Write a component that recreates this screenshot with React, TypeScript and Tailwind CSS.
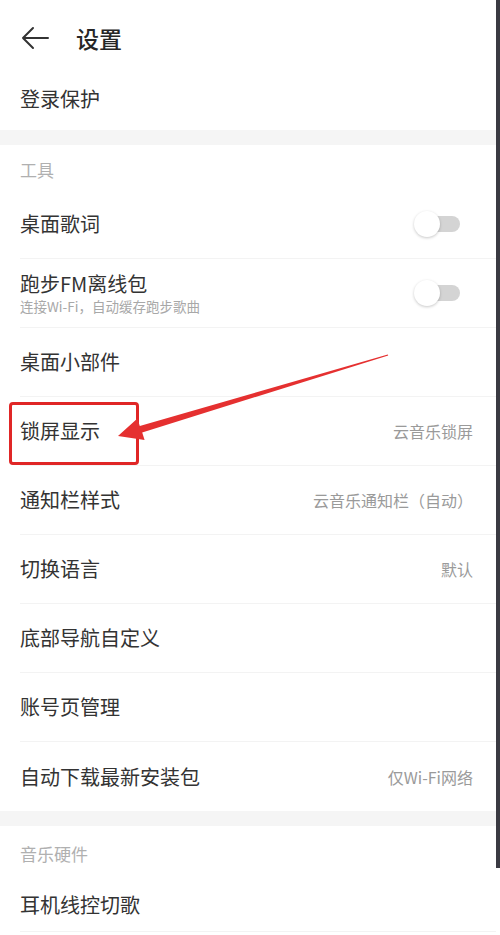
import React from "react";

interface Row {
  title: string;
  sub?: string;
  value?: string;
  toggle?: boolean;
  last?: boolean;
}

const toolRows: Row[] = [
  { title: "桌面歌词", toggle: true },
  { title: "跑步FM离线包", sub: "连接Wi-Fi，自动缓存跑步歌曲", toggle: true },
  { title: "桌面小部件" },
  { title: "锁屏显示", value: "云音乐锁屏" },
  { title: "通知栏样式", value: "云音乐通知栏（自动）" },
  { title: "切换语言", value: "默认" },
  { title: "底部导航自定义" },
  { title: "账号页管理" },
  { title: "自动下载最新安装包", value: "仅Wi-Fi网络", last: true },
];

function Toggle() {
  return (
    <div className="relative mr-[13px] h-[26px] w-[46px]">
      <div className="absolute right-0 top-[5px] h-[16px] w-[38px] rounded-full bg-[#d4d4d4]" />
      <div className="absolute left-0 top-0 h-[26px] w-[26px] rounded-full bg-white shadow-[0_1px_3px_rgba(0,0,0,0.22)]" />
    </div>
  );
}

function SettingRow({ row }: { row: Row }) {
  return (
    <div
      className={
        row.last
          ? "ml-5 flex h-[69px] items-center justify-between pr-[23px]"
          : "ml-5 flex h-[69px] items-center justify-between border-b border-[#f3f3f3] pr-[23px]"
      }
    >
      <div className="flex flex-col">
        <span className="text-[20px] leading-[26px] text-[#333]">{row.title}</span>
        {row.sub && (
          <span className="text-[13.5px] leading-[18px] text-[#a8a8a8]">{row.sub}</span>
        )}
      </div>
      {row.value && <span className="text-[16px] text-[#9a9a9a]">{row.value}</span>}
      {row.toggle && <Toggle />}
    </div>
  );
}

function SectionTitle({ label, h }: { label: string; h: string }) {
  return (
    <div className={`flex items-center px-5 pt-[4px] ${h}`}>
      <span className="text-[17px] text-[#b0b0b0]">{label}</span>
    </div>
  );
}

export default function App() {
  return (
    <div className="flex h-[935px] w-[500px] overflow-hidden bg-white font-['Noto_Sans_CJK_SC','Noto_Sans',sans-serif]">
      <div className="relative w-[496px]">
        <div className="flex h-[76px] items-center gap-[26px] px-5">
          <svg width="30" height="24" viewBox="0 0 30 24" fill="none">
            <path
              d="M28 12H3M13 2L3 12l10 10"
              stroke="#333"
              strokeWidth="2"
              strokeLinecap="round"
              strokeLinejoin="round"
            />
          </svg>
          <span className="text-[23px] font-medium text-[#262626]">设置</span>
        </div>
        <div className="flex h-[46px] items-center px-5">
          <span className="text-[20px] text-[#333]">登录保护</span>
        </div>
        <div className="h-[8px]" />
        <div className="h-[15px] bg-[#f5f5f5]" />

        <SectionTitle label="工具" h="h-[45px]" />
        {toolRows.map((row) => (
          <SettingRow key={row.title} row={row} />
        ))}

        <div className="h-[15px] bg-[#f5f5f5]" />
        <SectionTitle label="音乐硬件" h="h-[52px]" />
        <div className="ml-5 flex h-[54px] items-center border-b border-[#f3f3f3]">
          <span className="text-[20px] text-[#333]">耳机线控切歌</span>
        </div>

        {/* annotation */}
        <div className="absolute left-[9px] top-[402px] h-[63px] w-[130px] rounded-[4px] border-[3px] border-[#e02626]" />
        <svg className="absolute left-0 top-0" width="496" height="935" viewBox="0 0 496 935">
          <polygon
            points="388.2,355.6 142.2,432.4 144.6,440 118,436 137.4,418.6 139.8,426 387.8,354.4"
            fill="#e53030"
          />
        </svg>
      </div>
      <div className="h-[868px] w-[4px] bg-[#3a3a42]" />
    </div>
  );
}
